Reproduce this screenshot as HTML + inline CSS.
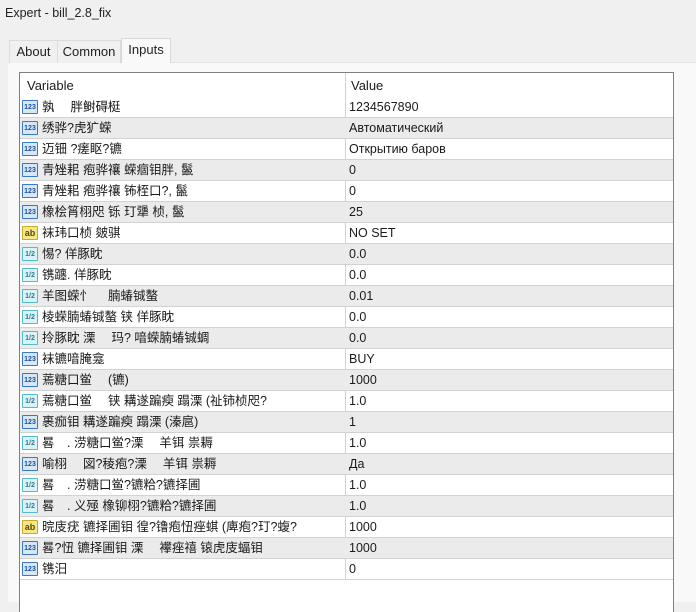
<!DOCTYPE html>
<html><head><meta charset="utf-8"><style>
*{margin:0;padding:0;box-sizing:border-box}
body{width:696px;height:602px;background:#f0f0f0;font-family:"Liberation Sans","Noto Sans CJK SC",sans-serif;font-size:12px;color:#1a1a1a;position:relative;overflow:hidden}
.title{position:absolute;left:5px;top:6px;font-size:12.5px;color:#222}
.tab{position:absolute;top:40px;height:23px;background:#f0f0f0;border:1px solid #dcdcdc;border-bottom:none;font-size:13px;padding-top:3px;text-align:center;color:#222}
.panel{position:absolute;left:8px;top:62px;width:688px;height:540px;background:#f9f9f9;border-top:1px solid #e3e3e3}
.list{position:absolute;left:19px;top:72px;width:655px;height:540px;background:#fff;border:1px solid #808080;border-bottom:none}
.row{position:absolute;left:0;width:653px;height:21px;border-bottom:1px solid #d2d2d2}
.row.g{background:#ebebeb}
.row .n{position:absolute;left:22px;top:0;line-height:20px;height:20px;white-space:nowrap;font-size:12.5px}
.row .v{position:absolute;left:329px;top:0;line-height:20px;white-space:nowrap;font-size:12.5px}
.div{position:absolute;left:325px;top:0;width:1px;height:507px;background:#d2d2d2}
.ic{position:absolute;left:2px;top:3px;width:16px;height:14px;font-size:7px;font-weight:bold;text-align:center;line-height:13px;border-radius:1px}
.i1{background:#d6e8f8;border:1px solid #3a78c2;color:#1e4f9a}
.i2{background:#d9f3f6;border:1px solid #55b9cc;color:#2a7b92}
.i3{background:#f6e78a;border:1px solid #c9a92a;color:#5b4a00;font-size:9px}
.hdr{position:absolute;left:0;top:0;height:24px;width:653px}
</style></head><body>
<div class="title">Expert - bill_2.8_fix</div>
<div class="panel"></div>
<div class="tab" style="left:9px;width:49px">About</div>
<div class="tab" style="left:57px;width:64px">Common</div>
<div class="tab" style="left:121px;top:38px;height:25px;width:50px;background:#f9f9f9;border-color:#d8d8d8">Inputs</div>
<div class="list">
<div class="hdr"><span style="position:absolute;left:7px;top:5px;font-size:13px">Variable</span><span style="position:absolute;left:331px;top:5px;font-size:13px">Value</span></div>
<div class="div"></div>
<div id="rows"></div>
</div>
<script>
var d=[
[1,"孰　 胖鲥碍梃","1234567890"],
[1,"绣骅?虎犷蝾","Автоматический"],
[1,"迈钿 ?瘥眍?镳","Открытию баров"],
[1,"青矬耜 疱骅禳 蝾痼钼胖, 鬣","0"],
[1,"青矬耜 疱骅禳 钸桎口?, 鬣","0"],
[1,"橡桧筲栩咫   铄 玎犟   桢, 鬣","25"],
[3,"袜玮口桢 皴骐","NO SET"],
[2,"惕? 佯豚眈","0.0"],
[2,"镌躔. 佯豚眈","0.0"],
[2,"羊图蝾忄　 腩蝽铖螯","0.01"],
[2,"棱蝾腩蝽铖螯 铗 佯豚眈","0.0"],
[2,"拎豚眈 溧　 玛? 喑蝾腩蝽铖蜩","0.0"],
[1,"袜镳喑腌龛","BUY"],
[1,"蔫糖口鲎　 (镳)","1000"],
[2,"蔫糖口鲎　 铗 耩遂蹁瘐 蹋溧 (祉铈桢咫?","1.0"],
[1,"裹痂钼 耩遂蹁瘐 蹋溧 (溱扈)","1"],
[2,"晷　. 涝糖口鲎?溧　 羊铒 祟耨","1.0"],
[1,"喻栩　 図?稜疱?溧　 羊铒 祟耨","Да"],
[2,"晷　. 涝糖口鲎?镳粭?镳择圃","1.0"],
[2,"晷　. 义殛 橡铆栩?镳粭?镳择圃","1.0"],
[3,"晥庋疣 镳择圃钼 徨?镥疱忸痤蜞 (庳疱?玎?蝮?","1000"],
[1,"晷?忸 镳择圃钼 溧　 襻痤禧 锿虎庋蝠钼","1000"],
[1,"镌汨","0"]];
var h="";
for(var i=0;i<d.length;i++){
var t=d[i][0],ic=t==1?'<div class="ic i1">123</div>':t==2?'<div class="ic i2">1/2</div>':'<div class="ic i3">ab</div>';
h+='<div class="row'+(i%2?' g':'')+'" style="top:'+(24+i*21)+'px">'+ic+'<span class="n">'+d[i][1]+'</span><span class="v">'+d[i][2]+'</span></div>';}
document.getElementById("rows").innerHTML=h;
</script>
</body></html>
